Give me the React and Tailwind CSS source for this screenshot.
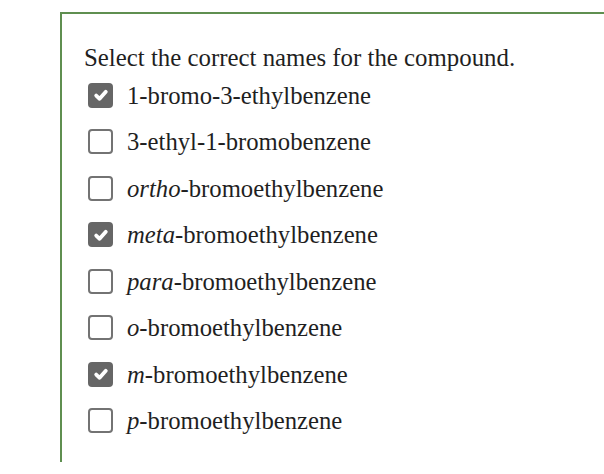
const options = [
  { pre: '', name: '1-bromo-3-ethylbenzene', checked: true },
  { pre: '', name: '3-ethyl-1-bromobenzene', checked: false },
  { pre: 'ortho', name: 'bromoethylbenzene', checked: false },
  { pre: 'meta', name: 'bromoethylbenzene', checked: true },
  { pre: 'para', name: 'bromoethylbenzene', checked: false },
  { pre: 'o', name: 'bromoethylbenzene', checked: false },
  { pre: 'm', name: 'bromoethylbenzene', checked: true },
  { pre: 'p', name: 'bromoethylbenzene', checked: false },
];

const Box = ({ checked }) =>
  checked ? (
    <span className="w-[25px] h-[25px] rounded-[4px] bg-[#666666] flex items-center justify-center shrink-0">
      <svg width="16" height="16" viewBox="0 0 16 16">
        <path d="M3.2 8.6 L6.6 11.8 L12.8 4.8" fill="none" stroke="white" strokeWidth="3.8" strokeLinecap="round" strokeLinejoin="round" />
      </svg>
    </span>
  ) : (
    <span className="w-[25px] h-[25px] rounded-[4px] border-2 border-[#737373] bg-white shrink-0" />
  );

export default function App() {
  return (
    <div className="w-[604px] h-[474px] overflow-hidden bg-white flex flex-col font-['Liberation_Serif',serif] text-[#1f1f1f]">
      <div className="ml-[60px] mt-[12px] h-[450px] border-l-2 border-t-2 border-[#5f8f50] pl-[22px] pt-[30px]">
        <p className="text-[24.85px] leading-[28px]">Select the correct names for the compound.</p>
        <div className="flex flex-col">
          {options.map((o, i) => (
            <label key={i} className="flex items-center gap-[14px] h-[46.5px] pl-[4px] text-[24.7px]">
              <Box checked={o.checked} />
              <span>
                {o.pre && <i>{o.pre}</i>}
                {o.pre && '-'}
                {o.name}
              </span>
            </label>
          ))}
        </div>
      </div>
    </div>
  );
}
